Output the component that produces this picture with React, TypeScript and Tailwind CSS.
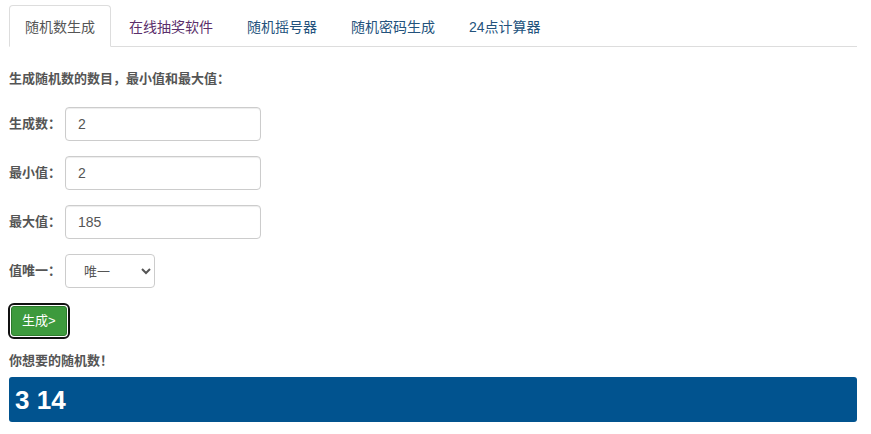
import { useState } from "react";

const tabs = [
  { label: "随机数生成", active: true, color: "text-[#555]" },
  { label: "在线抽奖软件", color: "text-[#5b2f6b]" },
  { label: "随机摇号器", color: "text-[#23527c]" },
  { label: "随机密码生成", color: "text-[#23527c]" },
  { label: "24点计算器", color: "text-[#23527c]" },
];

const font = { fontFamily: '"Liberation Sans", Arial, "Noto Sans CJK SC", sans-serif' };

const Field = ({ label, value }: { label: string; value: string }) => (
  <div className="flex items-center h-[33px] mb-4">
    <label className="w-[56px] text-[13px] font-bold text-[#555]">{label}</label>
    <input
      defaultValue={value}
      className="w-[196px] h-[34px] px-3 border border-[#ccc] rounded-[4px] text-[14px] text-[#555] outline-none shadow-[inset_0_1px_1px_rgba(0,0,0,0.075)]"
    />
  </div>
);

export default function App() {
  const [unique, setUnique] = useState("唯一");

  return (
    <div className="w-[871px] h-[434px] bg-white px-[9px] pt-[5px]" style={font}>
      <ul className="flex border-b border-[#ddd] w-[848px] h-[42px]">
        {tabs.map(t => (
          <li key={t.label} className="mr-[2px] -mb-px">
            <a
              className={`block h-[42px] px-[15px] pt-[11px] text-[14px] leading-[20px] rounded-t-[4px] border ${
                t.active ? "bg-white border-[#ddd] border-b-white" : "border-transparent"
              } ${t.color}`}
            >
              {t.label}
            </a>
          </li>
        ))}
      </ul>

      <p className="mt-[22px] mb-[19px] text-[13px] font-bold text-[#555]">生成随机数的数目，最小值和最大值：</p>

      <Field label="生成数：" value="2" />
      <Field label="最小值：" value="2" />
      <Field label="最大值：" value="185" />

      <div className="flex items-center h-[33px] mb-4">
        <label className="w-[56px] text-[13px] font-bold text-[#555]">值唯一：</label>
        <select
          value={unique}
          onChange={e => setUnique(e.target.value)}
          className="w-[90px] h-[34px] pl-[14px] border border-[#ccc] rounded-[4px] text-[13px] text-[#555] bg-white outline-none"
        >
          <option>唯一</option>
          <option>不唯一</option>
        </select>
      </div>

      <button className="ml-[2px] mt-[2px] h-[30px] px-[10px] text-[13px] text-white bg-[#3d9a3d] border border-[#2c7a2c] rounded-[3px] outline outline-2 outline-offset-1 outline-[#111]">
        生成&gt;
      </button>

      <p className="mt-[15px] mb-[7px] text-[13px] font-bold text-[#555]">你想要的随机数！</p>

      <div className="w-[848px] h-[45px] bg-[#01538f] rounded-[3px] flex items-center px-[6px]">
        <span className="text-[26px] font-bold text-white leading-none">3 14</span>
      </div>
    </div>
  );
}
